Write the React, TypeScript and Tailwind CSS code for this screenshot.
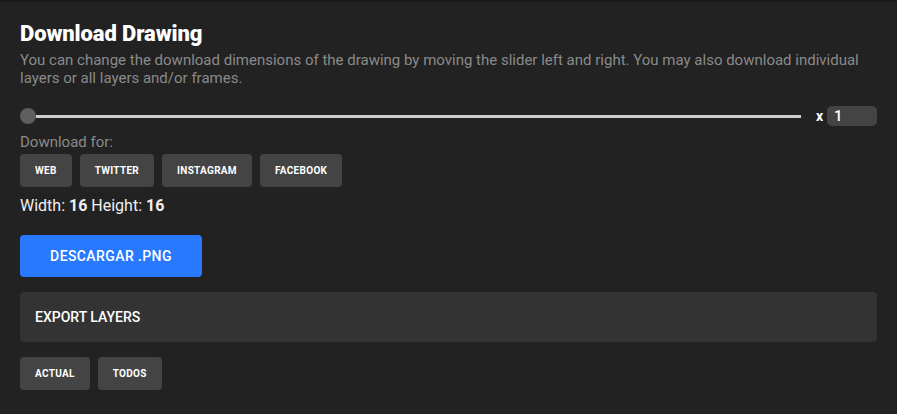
export default function App() {
  return (
    <div
      className="w-[897px] h-[414px] bg-[#222222] border-t-2 border-[#1a1a1a] text-white overflow-hidden"
      style={{ fontFamily: "Roboto, 'Liberation Sans', sans-serif" }}
    >
      <div className="px-5 pt-[17px]">
        {/* Title */}
        <h1 className="text-[22px] font-black leading-[30px] tracking-[-0.1px]">Download Drawing</h1>
        <p className="text-[15px] leading-[18px] text-[#8a8a8a] mt-[2px]">
          You can change the download dimensions of the drawing by moving the slider left and right. You may also download individual
          layers or all layers and/or frames.
        </p>

        {/* Slider */}
        <div className="flex items-center mt-[19px] h-5">
          <div className="flex-1 flex items-center">
            <div className="w-4 h-4 rounded-full bg-[#5f5f5f] shrink-0" />
            <div className="flex-1 h-[3px] bg-[#cfcfcf]" />
          </div>
          <span className="ml-[15px] mr-[4px] text-[14px] font-bold">x</span>
          <div className="w-[50px] h-5 rounded-[5px] bg-[#444444] text-[15px] leading-5 px-[7px] font-medium">1</div>
        </div>

        {/* Download for */}
        <div className="text-[15px] leading-[18px] text-[#8a8a8a] mt-[7px]">Download for:</div>
        <div className="flex gap-2 mt-[3px]">
          {["WEB", "TWITTER", "INSTAGRAM", "FACEBOOK"].map((t) => (
            <button
              key={t}
              className="h-[33px] px-[15px] rounded-[4px] bg-[#444444] text-[10px] font-bold tracking-[0.3px]"
            >
              {t}
            </button>
          ))}
        </div>

        <div className="text-[16px] leading-5 mt-[9px] text-[#f0f0f0]">
          Width: <b>16</b> Height: <b>16</b>
        </div>

        <button className="mt-[19px] h-[42px] w-[182px] rounded-[4px] bg-[#2979ff] text-[14px] font-medium tracking-[0.4px]">
          DESCARGAR .PNG
        </button>

        {/* Export layers */}
        <div className="mt-[15px] h-[50px] rounded-[4px] bg-[#333333] flex items-center px-[15px] text-[14px] font-medium">
          EXPORT LAYERS
        </div>

        <div className="flex gap-2 mt-[15px]">
          {["ACTUAL", "TODOS"].map((t) => (
            <button
              key={t}
              className="h-[33px] px-[15px] rounded-[4px] bg-[#444444] text-[10px] font-bold tracking-[0.3px]"
            >
              {t}
            </button>
          ))}
        </div>
      </div>
    </div>
  );
}
